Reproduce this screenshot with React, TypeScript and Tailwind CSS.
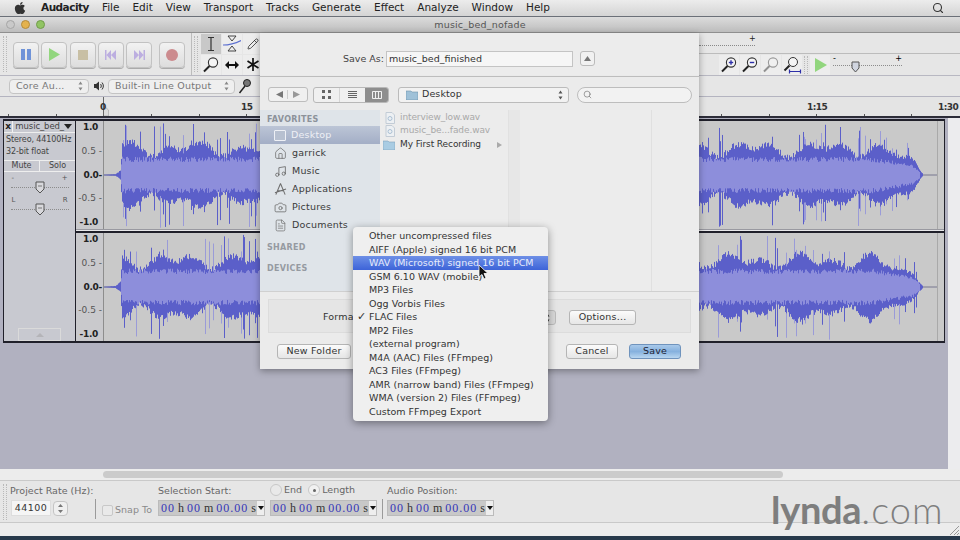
import React, { useMemo } from 'react';
import { Camera, FileText, Home, Music, Pencil, Search } from 'lucide-react';
import { FaApple } from 'react-icons/fa';

// seeded generator so the wave form is the same on every load
const rng = (seed: number) => () => {
  seed = (seed * 1664525 + 1013904223) % 4294967296;
  return seed / 4294967296;
};

const envelope = (x: number) => {
  if (x < 12) return 0.01 + x * 0.002;
  if (x < 17) return 0.03 + (x - 12) * 0.025;
  if (x < 19) return 0.16 + (x - 17) * 0.42;
  if (x < 770) return 1;
  if (x < 810) return 1 - ((x - 770) / 40) * 0.45;
  if (x < 820) return 0.55 - ((x - 810) / 10) * 0.53;
  return 0;
};

const Wave = ({ seed }: { seed: number }) => {
  const paths = useMemo(() => {
    const r = rng(seed);
    let peak = '';
    let pale = '';
    let rms = '';
    for (let x = 0; x < 834; x++) {
      const e = envelope(x);
      if (e === 0) continue;
      const beat = Math.sin(x / 7.5 + seed) * Math.sin(x / 23);
      const top = 54 * e * (0.42 + 0.15 * beat + r() * 0.12);
      const bottom = 54 * e * (0.42 + 0.15 * beat + r() * 0.12);
      const a = 54 * e * (0.24 + r() * 0.1);
      const b = 54 * e * (0.24 + r() * 0.1);
      peak += `M${x + 0.5} ${54 - top}V${54 + bottom}`;
      if (e > 0.2) rms += `M${x + 0.5} ${54 - a}V${54 + b}`;
      if (e > 0.2 && r() < 0.14) {
        const up = 54 * Math.min(e * (0.6 + r() * 0.38), 0.98);
        const down = 54 * Math.min(e * (0.6 + r() * 0.38), 0.98);
        if (r() < 0.45) pale += `M${x + 0.5} ${54 - up}V${54 + down}`;
        else peak += `M${x + 0.5} ${54 - up}V${54 + down}`;
      }
    }
    return { peak, pale, rms };
  }, [seed]);

  return (
    <svg width="841" height="108" viewBox="0 0 841 108" className="block shrink-0 bg-[#c9c9c9]">
      <path d="M0 54H834" stroke="#77778f" strokeWidth="1" />
      <path d={paths.pale} stroke="#9a9bd8" strokeWidth="1" fill="none" />
      <path d={paths.peak} stroke="#5b5fc9" strokeWidth="1" fill="none" />
      <path d={paths.rms} stroke="#8d8edb" strokeWidth="1" fill="none" />
      <path d="M834.5 0V108" stroke="#a9a9a9" strokeWidth="1" />
      <path d="M0.5 0V108" stroke="#8d8d8d" strokeWidth="1" />
    </svg>
  );
};

const VRuler = () => (
  <div className="w-[27px] h-[108px] shrink-0 bg-[#c9c9cc] flex flex-col justify-between items-end pr-px py-[1px] text-[9px] leading-[11px] text-[#222]">
    <span className="font-bold mr-[4px] tracking-[-0.3px]">1.0</span>
    <span className="text-[#555]">0.5 -</span>
    <span className="font-bold tracking-[-0.3px]">0.0-</span>
    <span className="text-[#555]">-0.5 -</span>
    <span className="font-bold mr-[4px] tracking-[-0.3px]">-1.0</span>
  </div>
);

const MiniSlider = ({ left, right }: { left: string; right: string }) => (
  <div className="relative w-[58px] h-[22px] mx-auto">
    <div className="flex justify-between text-[7px] leading-[8px] text-[#555] px-[1px]">
      <span>{left}</span>
      <span>{right}</span>
    </div>
    <div className="mt-[3px] h-[3px] border-b border-dotted border-[#8c8c8c]" />
    <svg width="10" height="13" viewBox="0 0 10 13" className="absolute left-[24px] top-[7px]">
      <path d="M1 1H9V8L5 12L1 8Z" fill="#d8d8dc" stroke="#555" />
      <path d="M3 5H7" stroke="#777" />
    </svg>
  </div>
);

const TransportButton = ({ children }: { children: React.ReactNode }) => (
  <div className="w-[26px] h-[26px] rounded-[4px] border border-[#c2c2c2] bg-gradient-to-b from-[#f2f2f2] to-[#dddddd] shadow-[0_1px_0_#aaa] flex items-center justify-center">
    {children}
  </div>
);

const ToolButton = ({ active, children }: { active?: boolean; children: React.ReactNode }) => (
  <div className={`w-[20px] h-[20px] flex items-center justify-center ${active ? 'bg-[#c8c8c8]' : 'bg-[#ededed]'}`}>
    {children}
  </div>
);

const Magnifier = ({ mark, faded }: { mark?: 'plus' | 'minus'; faded?: boolean }) => (
  <svg width="18" height="18" viewBox="0 0 18 18" className={faded ? 'opacity-45' : ''}>
    <circle cx="11" cy="6.5" r="4.6" fill="#f5f5f5" stroke="#333" strokeWidth="1.1" />
    <path d="M7.5 10L2 15.5" stroke="#222" strokeWidth="2" />
    {mark && <path d="M8.8 6.5H13.2" stroke="#2d2fa8" strokeWidth="1.4" />}
    {mark === 'plus' && <path d="M11 4.3V8.7" stroke="#2d2fa8" strokeWidth="1.4" />}
  </svg>
);

const ComboBox = ({ label, className }: { label: string; className: string }) => (
  <div className={`h-[15px] rounded-[4px] border border-[#c4c4c4] bg-[#efefef] flex items-center justify-between pl-[6px] pr-[5px] text-[9.5px] text-[#777] ${className}`}>
    <span className="tracking-[0.2px]">{label}</span>
    <svg width="5" height="10" viewBox="0 0 5 10">
      <path d="M2.5 0.5L4.5 3.5H0.5ZM2.5 9.5L0.5 6.5H4.5Z" fill="#888" />
    </svg>
  </div>
);

const TimeField = ({ className }: { className?: string }) => (
  <div className={`h-[16px] bg-[#c8c8c8] border border-[#bbb] flex items-center pl-[2px] font-['Liberation_Serif',serif] text-[12px] tracking-normal text-[#333] whitespace-pre ${className ?? ''}`}>
    <span className="text-[#3535b8] tracking-[1px]">00</span>
    <span> h </span>
    <span className="text-[#3535b8] tracking-[1px]">00</span>
    <span> m </span>
    <span className="text-[#3535b8] tracking-[1px]">00.00</span>
    <span> s</span>
    <span className="ml-auto w-[7px] h-[14px] bg-[#eee] flex items-center justify-center">
      <svg width="6" height="4" viewBox="0 0 6 4">
        <path d="M0 0H6L3 4Z" fill="#111" />
      </svg>
    </span>
  </div>
);

const rulerTicks = [8, 56, 151, 199, 246, 721, 769, 816, 864, 911];

const sidebar = [
  { label: 'garrick', icon: <Home size={13} strokeWidth={1.4} /> },
  { label: 'Music', icon: <Music size={13} strokeWidth={1.6} /> },
  {
    label: 'Applications',
    icon: (
      <svg width="14" height="14" viewBox="0 0 14 14" fill="none" stroke="currentColor" strokeWidth="1.1">
        <path d="M7 1L2 13M7 1L12 13M4 9H10M1 11L13 7" />
      </svg>
    ),
  },
  { label: 'Pictures', icon: <Camera size={13} strokeWidth={1.5} /> },
  { label: 'Documents', icon: <FileText size={13} strokeWidth={1.3} /> },
];

const formats = [
  'Other uncompressed files',
  'AIFF (Apple) signed 16 bit PCM',
  'WAV (Microsoft) signed 16 bit PCM',
  'GSM 6.10 WAV (mobile)',
  'MP3 Files',
  'Ogg Vorbis Files',
  'FLAC Files',
  'MP2 Files',
  '(external program)',
  'M4A (AAC) Files (FFmpeg)',
  'AC3 Files (FFmpeg)',
  'AMR (narrow band) Files (FFmpeg)',
  'WMA (version 2) Files (FFmpeg)',
  'Custom FFmpeg Export',
];

const DialogButton = ({ label, className }: { label: string; className: string }) => (
  <div className={`h-[15px] rounded-[3px] border border-[#b5b5b5] bg-gradient-to-b from-[#fbfbfb] to-[#e6e6e6] flex items-center justify-center text-[9.5px] text-[#333] tracking-[0.2px] ${className}`}>
    {label}
  </div>
);

const FileIcon = () => (
  <svg width="10" height="12" viewBox="0 0 10 12" className="opacity-60">
    <path d="M1 .5H7L9.500 3V11.500H1Z" fill="#eef3f8" stroke="#a8b8c8" />
    <circle cx="5" cy="6.500" r="2" fill="none" stroke="#7fa3c4" />
  </svg>
);

const SaveDialog = () => (
  <div className="absolute left-[260px] top-[33px] w-[439px] h-[336px] flex flex-col bg-[#ececec]/95 shadow-[0_2px_7px_rgba(0,0,0,0.35)] text-[#333]">
    <div className="h-[44px] shrink-0 border-b border-[#bdbdbd] pt-[18px] pl-[83px] flex items-start">
      <span className="w-[43px] shrink-0 whitespace-nowrap text-[9.5px] leading-[16px] text-[#444]">Save As:</span>
      <div className="w-[187px] h-[16px] bg-[#f6f6f6] border border-[#c4c4c4] pl-[2px] text-[9.5px] leading-[14px]">
        music_bed_finished
      </div>
      <div className="ml-[7px] w-[15px] h-[15px] rounded-[3px] border border-[#bbb] bg-[#f1f1f1] flex items-center justify-center">
        <svg width="7" height="5" viewBox="0 0 7 5">
          <path d="M3.500 0L7 5H0Z" fill="#777" />
        </svg>
      </div>
    </div>

    <div className="h-[33px] shrink-0 flex items-center pl-[8px] pt-[2px] bg-[#ebebeb]">
      <div className="w-[40px] h-[15px] rounded-[3px] border border-[#bdbdbd] bg-[#f0f0f0] flex items-center justify-around px-[5px]">
        <svg width="7" height="7" viewBox="0 0 7 7">
          <path d="M0 3.500L7 0V7Z" fill="#777" />
        </svg>
        <div className="w-px h-[9px] bg-[#ccc]" />
        <svg width="7" height="7" viewBox="0 0 7 7">
          <path d="M7 3.500L0 0V7Z" fill="#999" />
        </svg>
      </div>
      <div className="ml-[5px] w-[76px] h-[16px] rounded-[3px] border border-[#b8b8b8] bg-[#f0f0f0] flex overflow-hidden">
        <div className="w-[25px] flex items-center justify-center">
          <svg width="9" height="9" viewBox="0 0 9 9" fill="#666">
            <path d="M0 0H3V3H0ZM6 0H9V3H6ZM0 6H3V9H0ZM6 6H9V9H6Z" />
          </svg>
        </div>
        <div className="w-[26px] border-l border-[#d5d5d5] flex items-center justify-center">
          <svg width="9" height="8" viewBox="0 0 9 8" stroke="#666">
            <path d="M0 .5H9M0 2.500H9M0 4.500H9M0 6.500H9" />
          </svg>
        </div>
        <div className="flex-1 bg-[#8e8e8e] flex items-center justify-center">
          <svg width="10" height="8" viewBox="0 0 10 8" fill="none" stroke="#f2f2f2">
            <path d="M.5 .5H9.500V7.500H.5ZM3.500 .5V7.500M6.500 .5V7.500" />
          </svg>
        </div>
      </div>
      <div className="ml-[9px] w-[171px] h-[16px] rounded-[3px] border border-[#bbb] bg-[#f2f2f2] flex items-center justify-between pl-[7px] pr-[5px] text-[9.5px] tracking-[0.1px]">
        <span className="flex items-center gap-[4px]">
          <svg width="12" height="10" viewBox="0 0 12 10">
            <path d="M0 1H5L6 2H12V10H0Z" fill="#9fc1d8" stroke="#6e93ad" strokeWidth=".6" />
          </svg>
          Desktop
        </span>
        <svg width="5" height="10" viewBox="0 0 5 10">
          <path d="M2.500 0.500L4.500 3.500H0.500ZM2.500 9.500L0.500 6.500H4.500Z" fill="#555" />
        </svg>
      </div>
      <div className="ml-[8px] w-[115px] h-[16px] rounded-full border border-[#bdbdbd] bg-[#f2f2f2] flex items-center pl-[5px]">
        <Search size={9} strokeWidth={1.6} className="text-[#666]" />
      </div>
    </div>

    <div className="h-[181px] shrink-0 flex bg-[#ececec]">
      <div className="w-[120px] shrink-0 bg-[#dfe4e9] pt-[5px]">
        <div className="pl-[7px] h-[11px] text-[8px] font-bold leading-[10px] tracking-[0.3px] text-[#8c929a]">FAVORITES</div>
        <div className="h-[18px] bg-gradient-to-b from-[#bcc5d6] to-[#a3aec6] flex items-center pl-[14px] gap-[5px] text-[9.5px] text-[#eef0f5] tracking-[0.2px]">
          <div className="w-[12px] h-[11px] border border-[#eef0f5] rounded-[1px] bg-[#b7c0d0]" />
          Desktop
        </div>
        {sidebar.map((item) => (
          <div key={item.label} className="h-[18px] flex items-center pl-[14px] gap-[5px] text-[9.5px] text-[#3a3a3a] tracking-[0.2px]">
            <span className="w-[13px] flex justify-center text-[#6d6d6d]">{item.icon}</span>
            {item.label}
          </div>
        ))}
        <div className="pl-[7px] mt-[9px] text-[8px] font-bold leading-[10px] tracking-[0.3px] text-[#959aa1]">SHARED</div>
        <div className="pl-[7px] mt-[11px] text-[8px] font-bold leading-[10px] tracking-[0.3px] text-[#959aa1]">DEVICES</div>
      </div>
      <div className="w-[128px] shrink-0 pt-px text-[9px] tracking-[-0.1px]">
        <div className="h-[13px] flex items-center pl-[5px] gap-[5px] text-[#a9a9a9]"><FileIcon />interview_low.wav</div>
        <div className="h-[14px] flex items-center pl-[5px] gap-[5px] text-[#a9a9a9]"><FileIcon />music_be...fade.wav</div>
        <div className="h-[13px] flex items-center pl-[3px] gap-[5px] text-[#333]">
          <svg width="12" height="10" viewBox="0 0 12 10">
            <path d="M0 1H5L6 2H12V10H0Z" fill="#a9cce3" stroke="#7fa3bd" strokeWidth=".6" />
          </svg>
          My First Recording
          <svg width="5" height="6" viewBox="0 0 5 6" className="ml-auto mr-[6px]">
            <path d="M0 0L5 3L0 6Z" fill="#aaa" />
          </svg>
        </div>
      </div>
      <div className="w-[12px] shrink-0 border-l border-[#e1e1e1] bg-[#e7e7e7]" />
      <div className="w-[132px] shrink-0 border-r border-[#e0e0e0]" />
    </div>

    <div className="flex-1 border-t border-[#d0d0d0] bg-[#ebebeb]/95 px-[8px] pt-[7px]">
      <div className="h-[34px] border border-[#dcdcdc] bg-[#e5e5e5] relative flex items-center">
        <span className="ml-[54px] mt-[2px] w-[30px] overflow-hidden whitespace-nowrap text-[9.5px] tracking-[0.2px]">Format:</span>
        <div className="absolute left-[270px] top-[10px] w-[17px] h-[15px] rounded-r-[3px] bg-[#d8d8d8] border border-[#bbb] flex items-center justify-center">
          <svg width="5" height="10" viewBox="0 0 5 10">
            <path d="M2.500 0.500L4.500 3.500H0.500ZM2.500 9.500L0.500 6.500H4.500Z" fill="#333" />
          </svg>
        </div>
        <DialogButton label="Options..." className="absolute left-[300px] top-[10px] w-[67px]" />
      </div>
      <div className="flex mt-[11px] pl-[9px]">
        <DialogButton label="New Folder" className="w-[74px]" />
        <DialogButton label="Cancel" className="ml-[215px] w-[52px]" />
        <div className="ml-[11px] w-[52px] h-[15px] rounded-[3px] border border-[#6f93bd] bg-gradient-to-b from-[#a9c9ea] via-[#86b1de] to-[#b9d6f0] flex items-center justify-center text-[9.5px] text-[#223] tracking-[0.2px]">
          Save
        </div>
      </div>
    </div>
  </div>
);

const FormatMenu = () => (
  <div className="absolute left-[353px] top-[227px] w-[195px] h-[194px] rounded-[4px] bg-[#efefef] shadow-[0_2px_8px_rgba(0,0,0,0.4)] py-[2px] text-[9.5px] leading-[13.500px] text-[#333] tracking-[0.03px]">
    {formats.map((item) => (
      <div
        key={item}
        className={`relative h-[13.500px] pl-[16px] whitespace-nowrap ${item.startsWith('WAV') ? 'bg-gradient-to-b from-[#6e8fe6] to-[#3d63d8] text-[#e8ecfb]' : ''}`}
      >
        {item === 'FLAC Files' && <span className="absolute left-[4px] top-0 text-[11px]">✓</span>}
        {item}
      </div>
    ))}
  </div>
);

const Cursor = () => (
  <svg width="12" height="17" viewBox="0 0 12 17" className="absolute left-[478px] top-[264px]">
    <path d="M1 1V13L4 10.500L6 15L8 14L6 9.500H10Z" fill="#111" stroke="#fff" strokeWidth=".8" />
  </svg>
);

const Grip = ({ className }: { className?: string }) => (
  <div className={`w-[4px] shrink-0 border-x border-dotted border-[#b9b9b9] ${className ?? ''}`} />
);

export default function App() {
  return (
    <div className="relative w-[960px] h-[540px] overflow-hidden flex flex-col bg-[#b1b1c0] font-['DejaVu_Sans',sans-serif]">
      {/* mac menu bar */}
      <div className="h-[17px] shrink-0 border-b border-[#6b7078] bg-gradient-to-b from-[#ececec] to-[#d4d4d4] flex items-center text-[10.500px] text-[#222]">
        <FaApple size={14} className="ml-[13px] mr-[14px] text-[#333]" />
        <div className="flex gap-[13px] items-center">
          <span className="font-bold tracking-[-0.5px]">Audacity</span>
          <span>File</span>
          <span>Edit</span>
          <span>View</span>
          <span>Transport</span>
          <span>Tracks</span>
          <span>Generate</span>
          <span>Effect</span>
          <span>Analyze</span>
          <span>Window</span>
          <span>Help</span>
        </div>
        <Search size={12} strokeWidth={2.2} className="ml-auto mr-[16px] text-[#333]" />
      </div>

      {/* window title */}
      <div className="h-[16px] shrink-0 border-b border-[#8f8f8f] bg-gradient-to-b from-[#dcdcdc] to-[#bdbdbd] flex items-center relative">
        <div className="flex gap-[6px] pl-[6px]">
          <div className="w-[9px] h-[9px] rounded-full bg-[#c9c9c9] border border-[#a5a5a5]" />
          <div className="w-[9px] h-[9px] rounded-full bg-[#e4b24e] border border-[#b48b3e]" />
          <div className="w-[9px] h-[9px] rounded-full bg-[#91c463] border border-[#719b4b]" />
        </div>
        <div className="absolute inset-x-0 text-center text-[9.500px] leading-[15px] text-[#555] tracking-[0.2px]">music_bed_nofade</div>
      </div>

      {/* transport and tools */}
      <div className="h-[43px] shrink-0 border-b border-[#b8b8c2] bg-[#e6e6e6] flex items-stretch">
        <Grip className="ml-[3px] my-[3px]" />
        <div className="flex items-center pl-[6px] pt-[1px] w-[185px] border-r border-[#bcbcbc] shrink-0">
          <div className="flex gap-[2.300px]">
            <TransportButton>
              <svg width="10" height="11" viewBox="0 0 10 11" fill="#6f93d8"><path d="M0 0H4V11H0ZM6 0H10V11H6Z" /></svg>
            </TransportButton>
            <TransportButton>
              <svg width="13" height="13" viewBox="0 0 13 13" fill="#92d67e"><path d="M1 0L12 6.500L1 13Z" /></svg>
            </TransportButton>
            <TransportButton>
              <svg width="10" height="10" viewBox="0 0 10 10" fill="#c8bfa4"><path d="M0 0H10V10H0Z" /></svg>
            </TransportButton>
            <TransportButton>
              <svg width="11" height="10" viewBox="0 0 11 10" fill="#bcaee0"><path d="M0 0H1.500V10H0ZM6 0V10L1.500 5ZM11 0V10L6 5Z" /></svg>
            </TransportButton>
            <TransportButton>
              <svg width="11" height="10" viewBox="0 0 11 10" fill="#bcaee0"><path d="M9.500 0H11V10H9.500ZM5 0V10L9.500 5ZM0 0V10L5 5Z" /></svg>
            </TransportButton>
          </div>
          <div className="ml-[7px]">
            <TransportButton>
              <svg width="12" height="12" viewBox="0 0 12 12" fill="#cc8b8e"><circle cx="6" cy="6" r="6" /></svg>
            </TransportButton>
          </div>
        </div>
        <Grip className="ml-[2px] my-[3px]" />
        <div className="ml-[3px] grid grid-cols-3 gap-[1px] content-center">
          <ToolButton active>
            <svg width="10" height="14" viewBox="0 0 10 14" stroke="#333" strokeWidth="1.200" fill="none"><path d="M2 .5H8M5 .5V13.500M2 13.500H8" /></svg>
          </ToolButton>
          <ToolButton>
            <svg width="18" height="17" viewBox="0 0 18 17" fill="none">
              <path d="M5 1H13L9 6ZM5 16H13L9 11Z" stroke="#333" strokeWidth=".9" />
              <path d="M0 10C5 10 11 9 18 5.500" stroke="#5b6fd0" strokeWidth="1.200" />
            </svg>
          </ToolButton>
          <ToolButton><Pencil size={12} strokeWidth={1.5} className="text-[#222]" /></ToolButton>
          <ToolButton><Magnifier /></ToolButton>
          <ToolButton>
            <svg width="14" height="8" viewBox="0 0 14 8" fill="#111"><path d="M0 4L4 0V3H10V0L14 4L10 8V5H4V8Z" /></svg>
          </ToolButton>
          <ToolButton>
            <svg width="12" height="13" viewBox="0 0 12 13" stroke="#111" strokeWidth="1.700"><path d="M6 0V13M.5 3L11.500 10M11.500 3L.5 10" /></svg>
          </ToolButton>
        </div>

        {/* meters and zoom, right of the sheet */}
        <div className="ml-auto w-[261px] flex flex-col">
          <div className="h-[21px] border-b border-[#bcbcbc] relative">
            <span className="absolute left-[50px] top-[1px] text-[8px] leading-[10px] text-[#222]">+</span>
            <div className="absolute left-[0] top-[12px] w-[56px] border-b border-dotted border-[#888]" />
          </div>
          <div className="flex-1 flex items-center">
            <div className="ml-[20px] flex gap-[1px]">
              <ToolButton><Magnifier mark="plus" /></ToolButton>
              <ToolButton><Magnifier mark="minus" /></ToolButton>
              <ToolButton><Magnifier faded /></ToolButton>
              <ToolButton>
                <svg width="19" height="18" viewBox="0 0 19 18">
                  <circle cx="10" cy="6" r="4.500" fill="#f5f5f5" stroke="#333" />
                  <path d="M6.500 9.500L1.500 14.500" stroke="#222" strokeWidth="2" />
                  <path d="M6 15.500H18M6.500 13.500V17.500M17.500 13.500V17.500" stroke="#2d2fa8" strokeWidth="1.200" />
                </svg>
              </ToolButton>
            </div>
            <Grip className="ml-[2px] h-[18px]" />
            <div className="ml-[2px]">
              <ToolButton>
                <svg width="13" height="14" viewBox="0 0 13 14" fill="#92d67e"><path d="M1 0L13 7L1 14Z" /></svg>
              </ToolButton>
            </div>
            <div className="relative ml-[3px] w-[69px] h-[18px]">
              <span className="absolute left-0 top-[-2px] text-[8px] leading-[10px]">-</span>
              <span className="absolute right-0 top-[-2px] text-[8px] leading-[10px]">+</span>
              <div className="absolute inset-x-0 top-[9px] border-b border-dotted border-[#8c8c8c]" />
              <svg width="9" height="12" viewBox="0 0 9 12" className="absolute left-[18px] top-[5px]">
                <path d="M1 1H8V7L4.500 11L1 7Z" fill="#d0d5e0" stroke="#555" />
              </svg>
            </div>
          </div>
        </div>
      </div>

      {/* device toolbar */}
      <div className="h-[21px] shrink-0 border-b border-[#b4b4c0] bg-[#e6e6e6] flex items-center pl-[9px]">
        <ComboBox label="Core Au..." className="w-[80px]" />
        <svg width="10" height="10" viewBox="0 0 10 10" className="ml-[5px]">
          <path d="M0 3H2L5 .5V9.500L2 7H0Z" fill="#333" />
          <path d="M6.500 3C7.500 4 7.500 6 6.500 7M8 1.500C9.800 3.500 9.800 6.500 8 8.500" stroke="#333" fill="none" />
        </svg>
        <ComboBox label="Built-in Line Output" className="ml-[4px] w-[127px]" />
        <svg width="13" height="15" viewBox="0 0 13 15" className="ml-[3px]">
          <path d="M7 7L1.500 14" stroke="#222" strokeWidth="1.500" />
          <circle cx="9" cy="4" r="3.500" fill="#777" stroke="#222" />
        </svg>
      </div>

      {/* timeline ruler */}
      <div className="relative h-[21px] shrink-0 border-b-2 border-[#2c2c38] bg-[#e4e4e4] text-[9px] font-bold tracking-[-0.5px] text-[#333]">
        {rulerTicks.map((x) => (
          <div key={x} className="absolute bottom-0 w-px h-[2px] bg-[#555]" style={{ left: x }} />
        ))}
        <div className="absolute left-[103px] top-0 bottom-0 w-px bg-[#666]" />
        <svg width="5" height="10" viewBox="0 0 5 10" className="absolute left-[104px] top-[9px]">
          <path d="M0 0L4.500 4V10H0" fill="#dcdcdc" stroke="#aaa" strokeWidth=".7" />
        </svg>
        <span className="absolute left-[100px] top-[4px] leading-[12px]">0</span>
        <span className="absolute left-[241px] top-[4px] leading-[12px]">15</span>
        <span className="absolute left-[807px] top-[4px] leading-[12px]">1:15</span>
        <span className="absolute left-[938px] top-[4px] leading-[12px]">1:30</span>
      </div>

      {/* tracks */}
      <div className="flex-1 min-h-0 flex">
        <div className="w-[948px] shrink-0 pt-[1px] pl-[3px]">
          <div className="w-[942px] h-[224px] border-2 border-[#20202a] border-l-[1px] border-r-[2px] flex bg-[#20202a] gap-[1px]">
            <div className="w-[71px] shrink-0 bg-[#c8c9d0] flex flex-col text-[8px] text-[#444]">
              <div className="h-[12px] flex border-b border-[#eeeeee]">
                <div className="w-[11px] border-r border-[#f2f2f2] text-center text-[9px] leading-[11px] font-bold text-[#222]">x</div>
                <div className="flex-1 flex items-center justify-between pl-[2px] pr-[3px]">
                  <span className="text-[8.500px] tracking-[-0.1px] whitespace-nowrap">music_bed_</span>
                  <svg width="8" height="5" viewBox="0 0 8 5" className="shrink-0"><path d="M0 0H8L4 5Z" fill="#222" /></svg>
                </div>
              </div>
              <div className="pl-[2px] pt-[1px] leading-[12px] whitespace-nowrap tracking-[-0.1px]">
                <div>Stereo, 44100Hz</div>
                <div>32-bit float</div>
              </div>
              <div className="mt-[2px] h-[12px] flex border-y border-[#eeeeee] text-center leading-[10px]">
                <div className="w-[36px] border-r border-[#eeeeee]">Mute</div>
                <div className="flex-1">Solo</div>
              </div>
              <div className="pt-[2px] flex flex-col">
                <MiniSlider left="-" right="+" />
                <MiniSlider left="L" right="R" />
              </div>
              <div className="mt-auto mb-[0px] mx-[14px] h-[13px] border border-[#dadada] flex items-center justify-center">
                <svg width="8" height="4" viewBox="0 0 8 4"><path d="M4 0L8 4H0Z" fill="#b4b4b8" /></svg>
              </div>
            </div>
            <div className="flex-1 flex flex-col justify-between">
              <div className="flex bg-[#c9c9cc]"><VRuler /><Wave seed={17} /></div>
              <div className="flex-1 border-t border-[#9999a0] border-b-[2px] border-b-[#20202a] bg-[#e8e8ea]" />
              <div className="flex bg-[#c9c9cc]"><VRuler /><Wave seed={94} /></div>
            </div>
          </div>
        </div>
        <div className="flex-1 bg-[#ececee]" />
      </div>

      {/* horizontal scroller */}
      <div className="h-[11px] shrink-0 bg-[#ececec] flex items-center">
        <div className="ml-[103px] w-[680px] h-[7px] rounded-full bg-[#cbcbcb]" />
      </div>

      {/* selection toolbar */}
      <div className="relative h-[43px] shrink-0 border-y border-[#c9c9c9] bg-[#e6e6e6] flex items-start pl-[3px] text-[9.500px] text-[#666] tracking-[0.02px] whitespace-nowrap">
        <Grip className="h-[36px] mt-[3px]" />
        <div className="ml-[3px] w-[85px] shrink-0 pt-[4px]">
          <div className="leading-[12px]">Project Rate (Hz):</div>
          <div className="mt-[3px] flex items-center gap-[2px]">
            <div className="ml-[1px] w-[40px] h-[16px] bg-[#f5f5f5] border border-[#ddd] text-center text-[#333] leading-[14px] tracking-[0.5px]">44100</div>
            <div className="w-[15px] h-[15px] rounded-[4px] border border-[#c4c4c4] bg-[#efefef] flex items-center justify-center">
              <svg width="5" height="9" viewBox="0 0 5 9"><path d="M2.500 0L5 3H0ZM2.500 9L0 6H5Z" fill="#777" /></svg>
            </div>
          </div>
        </div>
        <div className="w-px h-[20px] bg-[#9a9a9a] mt-[18px] shrink-0" />
        <div className="ml-[6px] mt-[22px] w-[56px] shrink-0 flex items-center gap-[2px] text-[#8a8a8a]">
          <div className="w-[11px] h-[11px] rounded-[2px] border border-[#c8c8c8] bg-[#e9e9e9]" />
          Snap To
        </div>
        <div className="w-[112px] shrink-0 pt-[4px]">
          <div className="leading-[12px]">Selection Start:</div>
          <TimeField className="mt-[3px] w-[107px]" />
        </div>
        <div className="w-[112px] shrink-0 pt-[2px]">
          <div className="h-[14px] flex items-center">
            <div className="w-[12px] h-[12px] rounded-full border border-[#c8c8c8] bg-[#e9e9e9]" />
            <span className="ml-[2px]">End</span>
            <div className="ml-[6px] w-[12px] h-[12px] rounded-full border border-[#c8c8c8] bg-[#f1f1f1] flex items-center justify-center">
              <div className="w-[3px] h-[3px] rounded-full bg-[#666]" />
            </div>
            <span className="ml-[2px]">Length</span>
          </div>
          <TimeField className="mt-[3px] w-[107px]" />
        </div>
        <div className="w-px h-[20px] bg-[#9a9a9a] mt-[18px] shrink-0" />
        <div className="ml-[4px] w-[110px] shrink-0 pt-[4px]">
          <div className="leading-[12px]">Audio Position:</div>
          <TimeField className="mt-[3px] w-[107px]" />
        </div>
      </div>

      {/* status strip */}
      <div className="h-[13px] shrink-0 bg-[#ececec] flex justify-end items-end">
        <svg width="9" height="9" viewBox="0 0 9 9" stroke="#999" className="mr-[1px] mb-[1px]">
          <path d="M0 9L9 0M4 9L9 4M7 9L9 7" />
        </svg>
      </div>
      <div className="h-[4px] shrink-0 bg-[#27394b]" />

      {/* watermark */}
      <div className="absolute left-[771px] top-[487px] font-['Lato',sans-serif] text-[38px] leading-[44px] text-[#7e7e7e] whitespace-nowrap">
        <span className="font-bold tracking-[-0.3px]">lynda</span>
        <span className="font-light tracking-[1px]">.com</span>
      </div>

      <SaveDialog />
      <FormatMenu />
      <Cursor />
    </div>
  );
}
